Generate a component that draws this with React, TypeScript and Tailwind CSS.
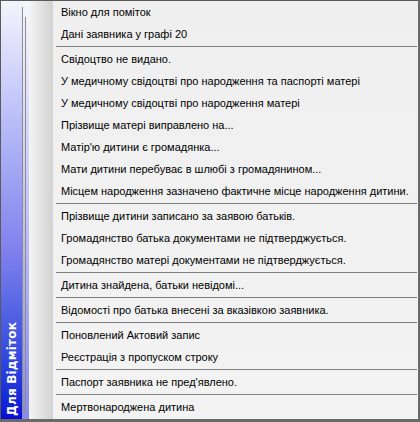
import React from "react"

type Entry = { label: string } | { sep: true }

const entries: Entry[] = [
  { label: "Вікно для поміток" },
  { label: "Дані заявника у графі 20" },
  { sep: true },
  { label: "Свідоцтво не видано." },
  { label: "У медичному свідоцтві про народження та паспорті матері" },
  { label: "У медичному свідоцтві про народження матері" },
  { label: "Прізвище матері виправлено на..." },
  { label: "Матір'ю дитини є громадянка..." },
  { label: "Мати дитини перебуває в шлюбі з громадянином..." },
  { label: "Місцем народження зазначено фактичне місце народження дитини." },
  { sep: true },
  { label: "Прізвище дитини записано за заявою батьків." },
  { label: "Громадянство батька документами не підтверджується." },
  { label: "Громадянство матері документами не підтверджується." },
  { sep: true },
  { label: "Дитина знайдена, батьки невідомі..." },
  { sep: true },
  { label: "Відомості про батька внесені за вказівкою заявника." },
  { sep: true },
  { label: "Поновлений Актовий запис" },
  { label: "Реєстрація з пропуском строку" },
  { sep: true },
  { label: "Паспорт заявника не пред'явлено." },
  { sep: true },
  { label: "Мертвонароджена дитина" },
]

export default function App() {
  return (
    <div className="w-[420px] h-[422px] bg-white">
      <div className="w-[420px] h-[422px] flex border-t border-l border-[#5a5a5a] border-r-2 border-b-[3px] border-r-[#6a6a6a] border-b-[#6a6a6a] overflow-hidden">
        {/* side banner */}
        <div className="w-[52px] h-full flex shrink-0">
          <div className="w-[21px] h-full bg-gradient-to-b from-[#f4f4fc] via-[#8080ec] via-60% to-[#0a0ad4] flex flex-col justify-end items-center pb-[3px]">
            <span
              className="[writing-mode:vertical-rl] rotate-180 text-white font-bold text-[12px] leading-none tracking-[0.2px]"
              style={{ fontFamily: '"DejaVu Sans", Verdana, sans-serif' }}
            >
              Для Відміток
            </span>
          </div>
          <div className="w-[7px] h-full flex bg-gradient-to-b from-[#f6f6fd] via-[#c4c4f6] to-[#8a8aee]">
            <div className="w-px mt-[6px] mb-[6px] bg-[#8c8c8c]" />
            <div className="w-[2px]" />
            <div className="w-px mt-[16px] mb-[6px] bg-[#8c8c8c]" />
          </div>
          <div className="flex-1 h-full bg-gradient-to-r from-[#f4f4f4] to-[#d2d2d2]" />
        </div>

        {/* menu items */}
        <div
          className="flex-1 h-full flex flex-col bg-gradient-to-b from-[#efefef] to-[#f3f3f3] text-[11px] text-black"
          style={{ fontFamily: '"Liberation Sans", Arial, sans-serif' }}
        >
          {entries.map((e, i) =>
            "sep" in e ? (
              <div key={i} className="h-[3px] flex items-center ml-[3px] mr-[1px]">
                <div className="h-px w-full bg-[#808080]" />
              </div>
            ) : (
              <div key={i} className="h-[22px] flex items-center pl-[8px] whitespace-nowrap">
                {e.label}
              </div>
            )
          )}
        </div>
      </div>
    </div>
  )
}
